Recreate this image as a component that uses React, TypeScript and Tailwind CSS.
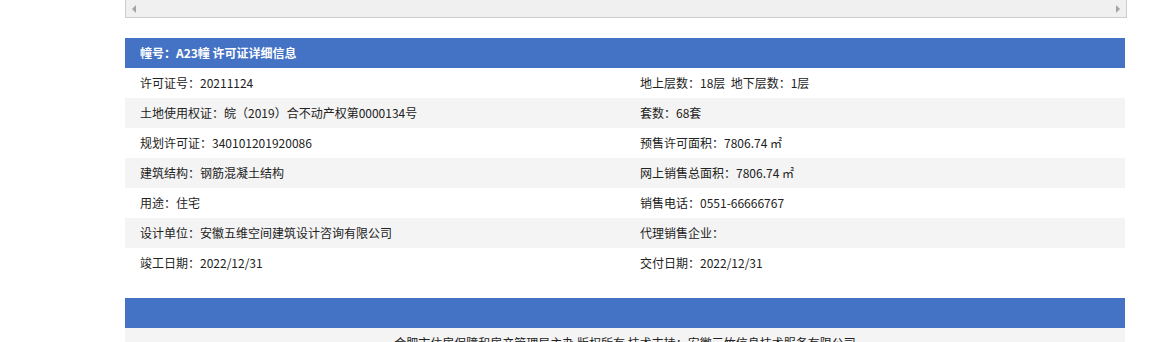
const rows: [string, string][] = [
  ["许可证号：20211124", "地上层数：18层  地下层数：1层"],
  ["土地使用权证：皖（2019）合不动产权第0000134号", "套数：68套"],
  ["规划许可证：340101201920086", "预售许可面积：7806.74 ㎡"],
  ["建筑结构：钢筋混凝土结构", "网上销售总面积：7806.74 ㎡"],
  ["用途：住宅", "销售电话：0551-66666767"],
  ["设计单位：安徽五维空间建筑设计咨询有限公司", "代理销售企业："],
  ["竣工日期：2022/12/31", "交付日期：2022/12/31"],
];

export default function App() {
  return (
    <div
      className="w-[1159px] h-[342px] overflow-hidden bg-white text-[12px] text-[#222]"
      style={{ fontFamily: '"Noto Sans CJK SC", "Liberation Sans", sans-serif' }}
    >
      <div className="ml-[125px] w-[1000px]">
        {/* horizontal scrollbar left over from the table above */}
        <div className="h-[18px] w-[1002px] bg-[#f0f0f0] border-l border-r border-b border-[#cdcdcd] flex items-center justify-between px-[6px]">
          <span className="w-0 h-0 border-y-[4px] border-y-transparent border-r-[4px] border-r-[#a3a3a3]" />
          <span className="w-0 h-0 border-y-[4px] border-y-transparent border-l-[4px] border-l-[#a3a3a3]" />
        </div>

        <div className="mt-[20px]">
          <div className="h-[30px] bg-[#4472c4] text-white font-bold flex items-center pl-[15px]">
            幢号：A23幢 许可证详细信息
          </div>
          {rows.map(([a, b], i) => (
            <div
              key={i}
              className={`h-[30px] grid grid-cols-2 items-center ${i % 2 === 1 ? "bg-[#f4f4f4]" : "bg-white"}`}
            >
              <div className="pl-[15px] whitespace-pre">{a}</div>
              <div className="pl-[15px] whitespace-pre">{b}</div>
            </div>
          ))}
        </div>

        <div className="mt-[20px] h-[30px] bg-[#4472c4]" />
        <div className="bg-[#f4f4f4] h-[40px] pt-[6px] text-center">
          合肥市住房保障和房产管理局主办 版权所有 技术支持：安徽三竹信息技术服务有限公司
        </div>
      </div>
    </div>
  );
}
